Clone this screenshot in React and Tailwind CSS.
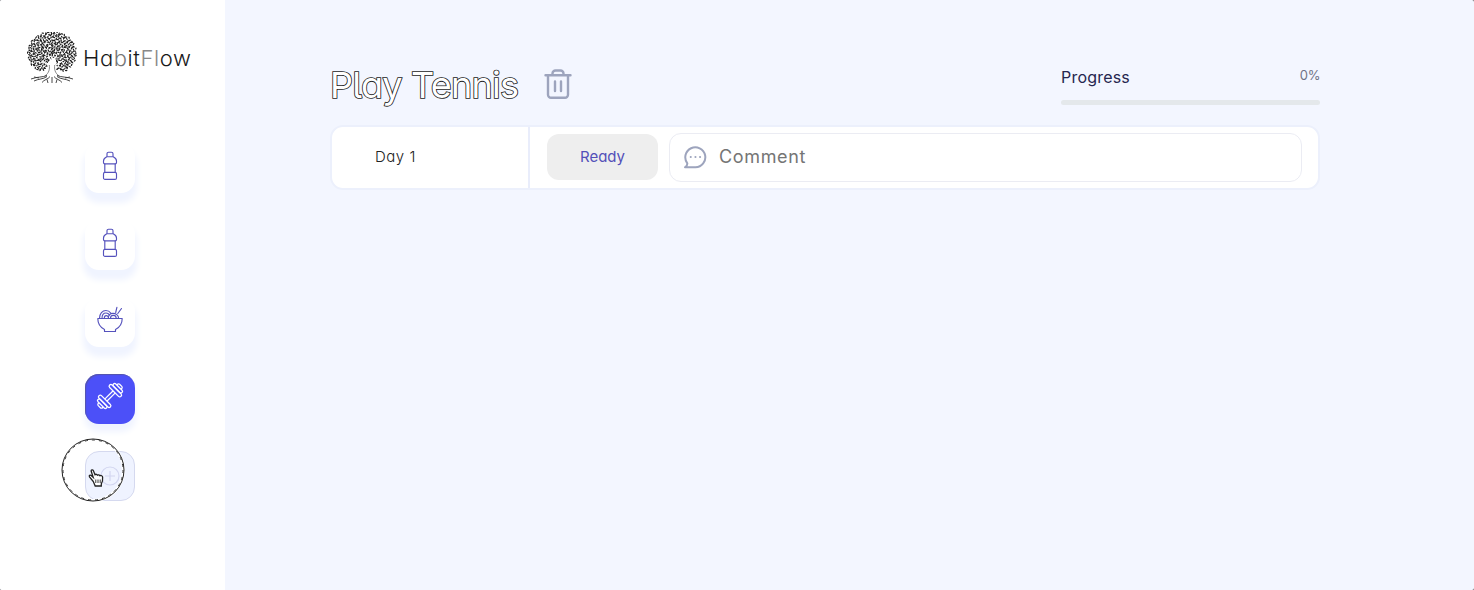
const INTER = "font-['Inter',sans-serif] [font-feature-settings:'cv11','cv05']";

// Deterministic leaf marks spread over the crown of the tree.
const leaves = [];
for (let ring = 0; ring < 12; ring++) {
  const r = 1.5 + ring * 2;
  const n = Math.max(5, Math.round(r * 2.3));
  for (let i = 0; i < n; i++) {
    const k = ring * 31 + i * 17;
    const a = (i / n) * Math.PI * 2 + ring * 0.7;
    const rr = r + Math.sin(k * 1.7) * 0.9;
    const x = 25 + Math.cos(a) * rr;
    const y = 21 + Math.sin(a) * rr * 0.88;
    const inTrunk = y > 27 && Math.abs(x - 25) < 2 + (y - 26) * 0.28;
    if (!inTrunk && y < 39.5) leaves.push({ x, y, t: (k * 47) % 180, w: 1.1 + Math.abs(Math.sin(k)) * 0.45 });
  }
}

function Tree() {
  return (
    <svg width="50" height="52" viewBox="0 0 50 52" className="shrink-0">
      {leaves.map((l, i) => (
        <ellipse key={i} cx={l.x} cy={l.y} rx={l.w} ry="0.65" fill="#1c1c1c" transform={`rotate(${l.t} ${l.x} ${l.y})`} />
      ))}
      <path d="M25 24v10M25 31l-4-8M25 31l5-8M24 35l-9-6M26 35l9-6" stroke="#fff" strokeWidth="1.3" fill="none" />
      <path d="M22.200 31c.8 5 .4 9-3.700 13h13c-4.100-4-4.500-8-3.700-13z" fill="#fff" />
      <path d="M22.300 33c.5 4-.1 8-4.500 11M27.700 33c-.5 4 .1 8 4.500 11" stroke="#555" strokeWidth=".7" fill="none" />
      <path d="M20 43.500c-5 2-9 1-16 3.500M20 44.500c-4 3-8 2-13 4.500M23 44.500c-2 3-6 3-8 6M25 45v6M27 44.500c2 3 6 3 8 6M30 44.500c4 3 8 2 13 4.500M30 43.500c5 2 9 1 16 3.500M12 46l-5-1M38 46l5-1M20 47.500l1 3.500M30 47.500l-1 3.500" stroke="#333" strokeWidth=".9" fill="none" />
    </svg>
  );
}

function Bottle() {
  return (
    <svg width="16" height="30" viewBox="0 0 16 30" fill="none" stroke="#5552bd" strokeWidth="1.15" strokeLinejoin="round">
      <path d="M5 5.700V2.700a1.500 1.500 0 0 1 1.500-1.500h3A1.500 1.500 0 0 1 11 2.700v3" />
      <path d="M4.800 5.700h6.400c1.500.7 3.300 2.300 3.300 4.300v1.500c0 .8-.5 1.300-1.300 1.300H2.800c-.8 0-1.300-.5-1.300-1.300V10c0-2 1.800-3.600 3.300-4.300z" />
      <path d="M2.800 12.800v8.500M13.200 12.800v8.500" />
      <rect x="1.500" y="21.300" width="13" height="7.100" rx="1.500" />
    </svg>
  );
}

function Noodles() {
  return (
    <svg width="26" height="27" viewBox="0 0 26 27" fill="none" stroke="#5552bd" strokeWidth="1.150" strokeLinecap="round" strokeLinejoin="round">
      <path d="M.8 12.500h24.400c0 5-2.800 9-6.700 11v2h-11v-2C3.600 21.500.8 17.500.8 12.500z" />
      <path d="M2.500 12.300c0-4.800 3-7.800 6.400-7.800 2.300 0 3.800 1 4.800 2.500M5 12.300c0-3.300 1.800-5.300 4-5.300 1.600 0 2.800.8 3.500 2M7.300 12.300c0-1.700.8-2.700 2-2.700.9 0 1.600.5 2 1.300" />
      <path d="M11.300 12.300c0-3 2-5 4.700-5s5.600 1.800 5.600 5M13.500 12.300c0-1.800 1.300-2.900 2.700-2.900s3 1 3 2.900M16 12.200h.4" />
      <path d="M18.700 6.500l1.200-5.200M20.800 7.500l3.700-5" />
    </svg>
  );
}

function Dumbbell() {
  return (
    <svg width="30" height="30" viewBox="-15 -15 30 30" fill="none" stroke="#fff" strokeWidth="1.250" strokeLinejoin="round">
      <g transform="rotate(-45)">
        <path d="M-6-1.500H6M-6 1.500H6" />
        <rect x="5.800" y="-8" width="3.500" height="16" rx="1.700" />
        <rect x="9.300" y="-6" width="3.300" height="12" rx="1.600" />
        <path d="M12.600-3h1a1.500 1.500 0 0 1 1.500 1.500v3A1.500 1.500 0 0 1 13.600 3h-1" />
        <rect x="-9.300" y="-8" width="3.500" height="16" rx="1.700" />
        <rect x="-12.600" y="-6" width="3.300" height="12" rx="1.600" />
        <path d="M-12.600-3h-1a1.500 1.500 0 0 0-1.500 1.500v3A1.500 1.500 0 0 0-13.600 3h1" />
      </g>
    </svg>
  );
}

function Trash() {
  return (
    <svg width="28" height="32" viewBox="0 0 28 32" fill="none" stroke="#9da4bd" strokeWidth="2.400" strokeLinecap="round" strokeLinejoin="round">
      <path d="M1.500 6.300h25M8.500 6V4.500a3 3 0 0 1 3-3h5a3 3 0 0 1 3 3V6M4 6.500v19.300a3 3 0 0 0 3 3h14a3 3 0 0 0 3-3V6.500M11 12.500v9.500M17 12.500v9.500" />
    </svg>
  );
}

function Bubble() {
  return (
    <svg width="24" height="24" viewBox="0 0 24 24" fill="none" stroke="#9da4bd" strokeWidth="2" strokeLinecap="round" strokeLinejoin="round">
      <path d="M4.300 18.300A10 10 0 1 1 12.500 22.300H2c1.500-1 2.500-2.300 2.300-4z" />
      <path d="M7.700 12h.1M12.400 12h.1M17 12h.1" />
    </svg>
  );
}

function Tile({ children }) {
  return (
    <div className="flex h-[50px] w-[50px] items-start justify-center rounded-[14px] bg-white pt-[8px] shadow-[0_8px_6px_2px_#f0f4ff]">
      {children}
    </div>
  );
}

function Pointer() {
  return (
    <svg width="64" height="64" viewBox="0 0 64 64" fill="none" className="absolute -left-[25px] -top-[14px]">
      <circle cx="32" cy="32" r="30.500" stroke="#fff" strokeWidth="3" />
      <circle cx="32" cy="32" r="31" stroke="#222" strokeWidth="1" />
      <circle cx="32" cy="32" r="30" stroke="#333" strokeWidth="1" strokeDasharray="3 4" />
      <path d="M32.300 43.500l-3.800-4.700c-.8-1.200.6-2.200 1.700-1.300l2 1.800-2-6c-.4-1.500 1.500-2.100 2.100-.7l1.700 4.100c1-.8 2-.4 2.400.4 1-.6 2-.2 2.400.6 1.200-.5 2.700.1 2.800 1.400.3 3-.1 5-1.300 6.700v2.200h-6.100z" fill="#fff" stroke="#222" strokeWidth="1.300" />
      <path d="M34.800 41.500v3.500M37 41.500v3.500M39.200 41.500v3.500" stroke="#222" strokeWidth=".9" />
    </svg>
  );
}

export default function App() {
  return (
    <div className="h-[590px] w-[1474px] bg-[#666]">
      <div className={`flex h-full w-full overflow-hidden rounded-[2px] bg-[#f3f6ff] ${INTER}`}>
        <aside className="flex w-[225px] shrink-0 flex-col bg-white">
          <div className="mt-8 flex h-[52px] items-center pl-[27px]">
            <Tree />
            <span className="ml-[6px] text-[22px] font-light tracking-[0.6px] text-[#1a1a1a] [font-feature-settings:'cv11']">
              Ha<span className="text-[#777]">b</span>it<span className="text-[#888]">Fl</span>ow
            </span>
          </div>
          <nav className="mt-[59px] flex flex-col gap-[27px] pl-[85px]">
            <Tile><Bottle /></Tile>
            <Tile><Bottle /></Tile>
            <Tile><div className="pt-px"><Noodles /></div></Tile>
            <div className="flex h-[50px] w-[50px] items-start justify-center rounded-[14px] bg-[#4c50f8] pt-[7px] shadow-[0_7px_6px_1px_#f0f4ff,inset_1px_1px_1px_#5555a8]">
              <Dumbbell />
            </div>
            <div className="relative flex h-[50px] w-[50px] items-center justify-center rounded-[14px] border border-[#d5d9ef] bg-[#eff3ff]">
              <svg width="20" height="20" viewBox="0 0 20 20" fill="none" stroke="#d3d6f0" strokeWidth="1.200">
                <circle cx="10" cy="10" r="9" />
                <path d="M10 5v10M5 10h10" />
              </svg>
              <Pointer />
            </div>
          </nav>
        </aside>
        <main className="ml-[105px] flex w-[990px] flex-col pt-[62px]">
          <div className="flex h-[63px] items-start justify-between">
            <div className="flex items-start">
              <h1 className="w-[214px] whitespace-nowrap text-[36px] font-normal leading-[46px] tracking-[-0.75px] text-white [-webkit-text-stroke:1.7px_#222] [paint-order:stroke]">Play Tennis</h1>
              <div className="mt-[7px]"><Trash /></div>
            </div>
            <div className="w-[259px] pt-1">
              <div className="flex justify-between">
                <span className="text-[16px] leading-[22px] tracking-[0.2px] text-[#26264f]">Progress</span>
                <span className="text-[13px] leading-[18px] tracking-[-0.4px] text-[#6f7285]">0%</span>
              </div>
              <div className="mt-[12px] h-[5px] rounded-full bg-[#e4e8eb]" />
            </div>
          </div>
          <div className="flex h-[65px] items-stretch rounded-[13px] border-2 border-[#ecf0fc] bg-white">
            <div className="w-[198px] border-r-2 border-[#e9edfb] pl-[43px] text-[15px] font-light leading-[60px] tracking-[0.5px] text-[#222]">Day 1</div>
            <div className="flex flex-1 items-center gap-[11px] pb-px pl-[17px] pr-[16px]">
              <button className="h-[46px] w-[111px] rounded-[12px] bg-[#eeeeee] text-[15px] leading-[44px] text-[#5350b9]">Ready</button>
              <div className="flex h-[49px] flex-1 items-center rounded-[12px] border border-[#ebecf3] pl-[13px]">
                <Bubble />
                <span className="ml-[12px] pb-px text-[18px] tracking-[0.65px] text-[#757575]">Comment</span>
              </div>
            </div>
          </div>
        </main>
      </div>
    </div>
  );
}
